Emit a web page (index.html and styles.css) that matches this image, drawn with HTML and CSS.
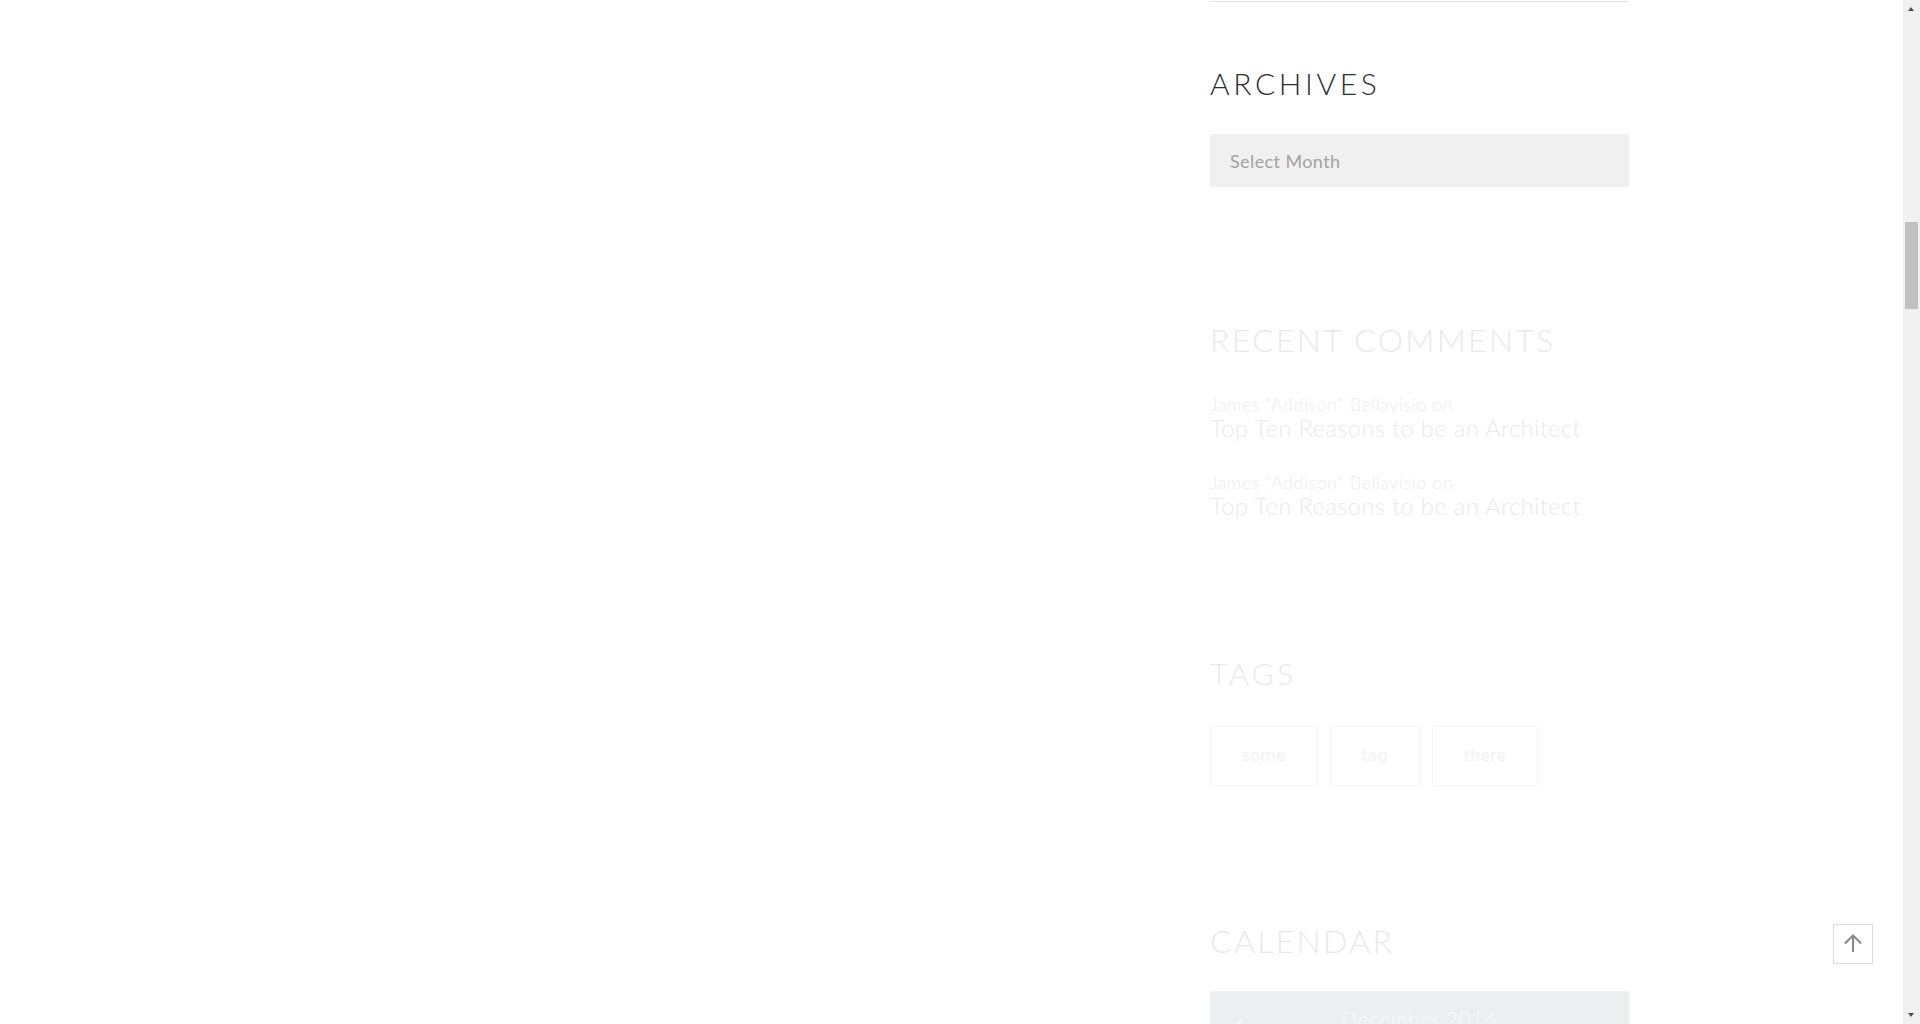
FILE: index.html
```html
<!DOCTYPE html>
<html lang="en">
<head>
<meta charset="utf-8">
<title>Sidebar</title>
<link rel="stylesheet" href="styles.css">
</head>
<body>
<div class="page">
  <main class="content"></main>
  <aside class="sidebar">
    <div class="widget-end"></div>

    <section class="widget widget-archives">
      <h3 class="widget-title">Archives</h3>
      <select class="archive-select">
        <option>Select Month</option>
      </select>
    </section>

    <section class="widget widget-comments faded">
      <h3 class="widget-title widget-title-lg">Recent Comments</h3>
      <ul class="comment-list">
        <li class="comment-item">
          <div class="comment-author">James "Addison" Bellavisio on</div>
          <a class="comment-link" href="#">Top Ten Reasons to be an Architect</a>
        </li>
        <li class="comment-item">
          <div class="comment-author">James "Addison" Bellavisio on</div>
          <a class="comment-link" href="#">Top Ten Reasons to be an Architect</a>
        </li>
      </ul>
    </section>

    <section class="widget widget-tags faded">
      <h3 class="widget-title">Tags</h3>
      <div class="tag-cloud">
        <a class="tag" href="#">some</a>
        <a class="tag" href="#">tag</a>
        <a class="tag" href="#">there</a>
      </div>
    </section>

    <section class="widget widget-calendar faded">
      <h3 class="widget-title widget-title-lg">Calendar</h3>
      <div class="calendar">
        <div class="calendar-head">
          <svg class="cal-prev" width="10" height="16" viewBox="0 0 10 16"><path d="M8 2 L2 8 L8 14" fill="none" stroke="currentColor" stroke-width="2.4"/></svg>
          <span class="cal-month">December 2016</span>
          <span class="cal-spacer"></span>
        </div>
      </div>
    </section>
  </aside>
</div>

<a class="back-top" href="#" aria-label="Back to top">
  <svg width="40" height="40" viewBox="0 0 40 40"><path d="M20 28.5 V11 M11.5 19.5 L20 11 L28.5 19.5" fill="none" stroke="#8a8a8a" stroke-width="2.2"/></svg>
</a>

<div class="fake-scrollbar">
  <span class="sb-up"></span>
  <span class="sb-thumb"></span>
  <span class="sb-down"></span>
</div>
</body>
</html>
```

FILE: styles.css
```css
html, body {
  margin: 0;
  padding: 0;
  height: 1024px;
  overflow: hidden;
  background: #ffffff;
}

body {
  font-family: "Lato", "Liberation Sans", sans-serif;
  color: #333;
}

.page {
  display: grid;
  grid-template-columns: 1210px 419px;
}

.sidebar {
  display: flex;
  flex-direction: column;
}

.widget-end {
  padding-top: 1px;
  border-bottom: 1px solid #e5e5e5;
}

.widget-title {
  margin: 0;
  font-family: "Lato", sans-serif;
  font-weight: 300;
  font-size: 30px;
  line-height: 36px;
  letter-spacing: 3.6px;
  text-transform: uppercase;
  color: #2e2e2e;
}

.widget-title-lg {
  font-size: 32px;
  line-height: 38px;
  letter-spacing: 2.3px;
}

.widget-archives {
  margin-top: 63px;
}

.archive-select {
  display: block;
  margin-top: 33px;
  width: 100%;
  height: 53px;
  padding: 0 20px;
  border: 0;
  border-radius: 0;
  background: #f0f0f0;
  color: #a2a2a2;
  font-family: "Lato", sans-serif;
  font-size: 18px;
  letter-spacing: 0.4px;
  -webkit-appearance: none;
  appearance: none;
  outline: none;
}

.faded .widget-title {
  color: #e9e9e9;
}

.widget-comments {
  margin-top: 134px;
}

.comment-list {
  list-style: none;
  margin: 35px 0 0;
  padding: 0;
  display: flex;
  flex-direction: column;
  gap: 31px;
}

.comment-item {
  display: flex;
  flex-direction: column;
}

.comment-author {
  font-size: 18px;
  font-weight: 300;
  line-height: 21px;
  color: #ececec;
  letter-spacing: 0.52px;
}

.comment-link {
  font-size: 24px;
  font-weight: 300;
  line-height: 26px;
  color: #eaeaea;
  text-decoration: none;
  letter-spacing: 0.25px;
}

.widget-tags {
  margin-top: 136px;
}

.tag-cloud {
  margin-top: 35px;
  display: flex;
  gap: 12px;
}

.tag {
  display: block;
  padding: 19px 31px;
  border: 1px solid #f6f6f6;
  font-family: "DejaVu Sans", sans-serif;
  font-size: 16px;
  line-height: 20px;
  color: #f2f2f2;
  text-decoration: none;
}

.widget-calendar {
  margin-top: 136px;
}

.calendar {
  margin-top: 31px;
  height: 300px;
  background: #eceef0;
}

.calendar-head {
  display: flex;
  align-items: center;
  padding: 13px 25px 0 24px;
  height: 30px;
  color: #f7fafc;
}

.cal-prev {
  flex: none;
  margin-top: 14px;
}

.cal-month {
  flex: 1;
  text-align: center;
  font-size: 21px;
  font-weight: 300;
  line-height: 30px;
  letter-spacing: 0.6px;
}

.cal-spacer {
  width: 10px;
}

.back-top {
  position: fixed;
  left: 1833px;
  top: 924px;
  width: 40px;
  height: 40px;
  box-sizing: border-box;
  border: 1px solid #dcdcdc;
  background: #ffffff;
  display: flex;
  align-items: center;
  justify-content: center;
}

.back-top svg {
  display: block;
}

.fake-scrollbar {
  position: fixed;
  top: 0;
  right: 0;
  width: 17px;
  height: 1024px;
  background: #f1f1f1;
}

.sb-thumb {
  position: absolute;
  left: 2px;
  top: 222px;
  width: 13px;
  height: 87px;
  background: #c1c1c1;
}

.sb-up,
.sb-down {
  position: absolute;
  left: 5px;
  width: 0;
  height: 0;
  border-left: 3.5px solid transparent;
  border-right: 3.5px solid transparent;
}

.sb-up {
  top: 7px;
  border-bottom: 4px solid #505050;
}

.sb-down {
  bottom: 7px;
  border-top: 4px solid #505050;
}
```
